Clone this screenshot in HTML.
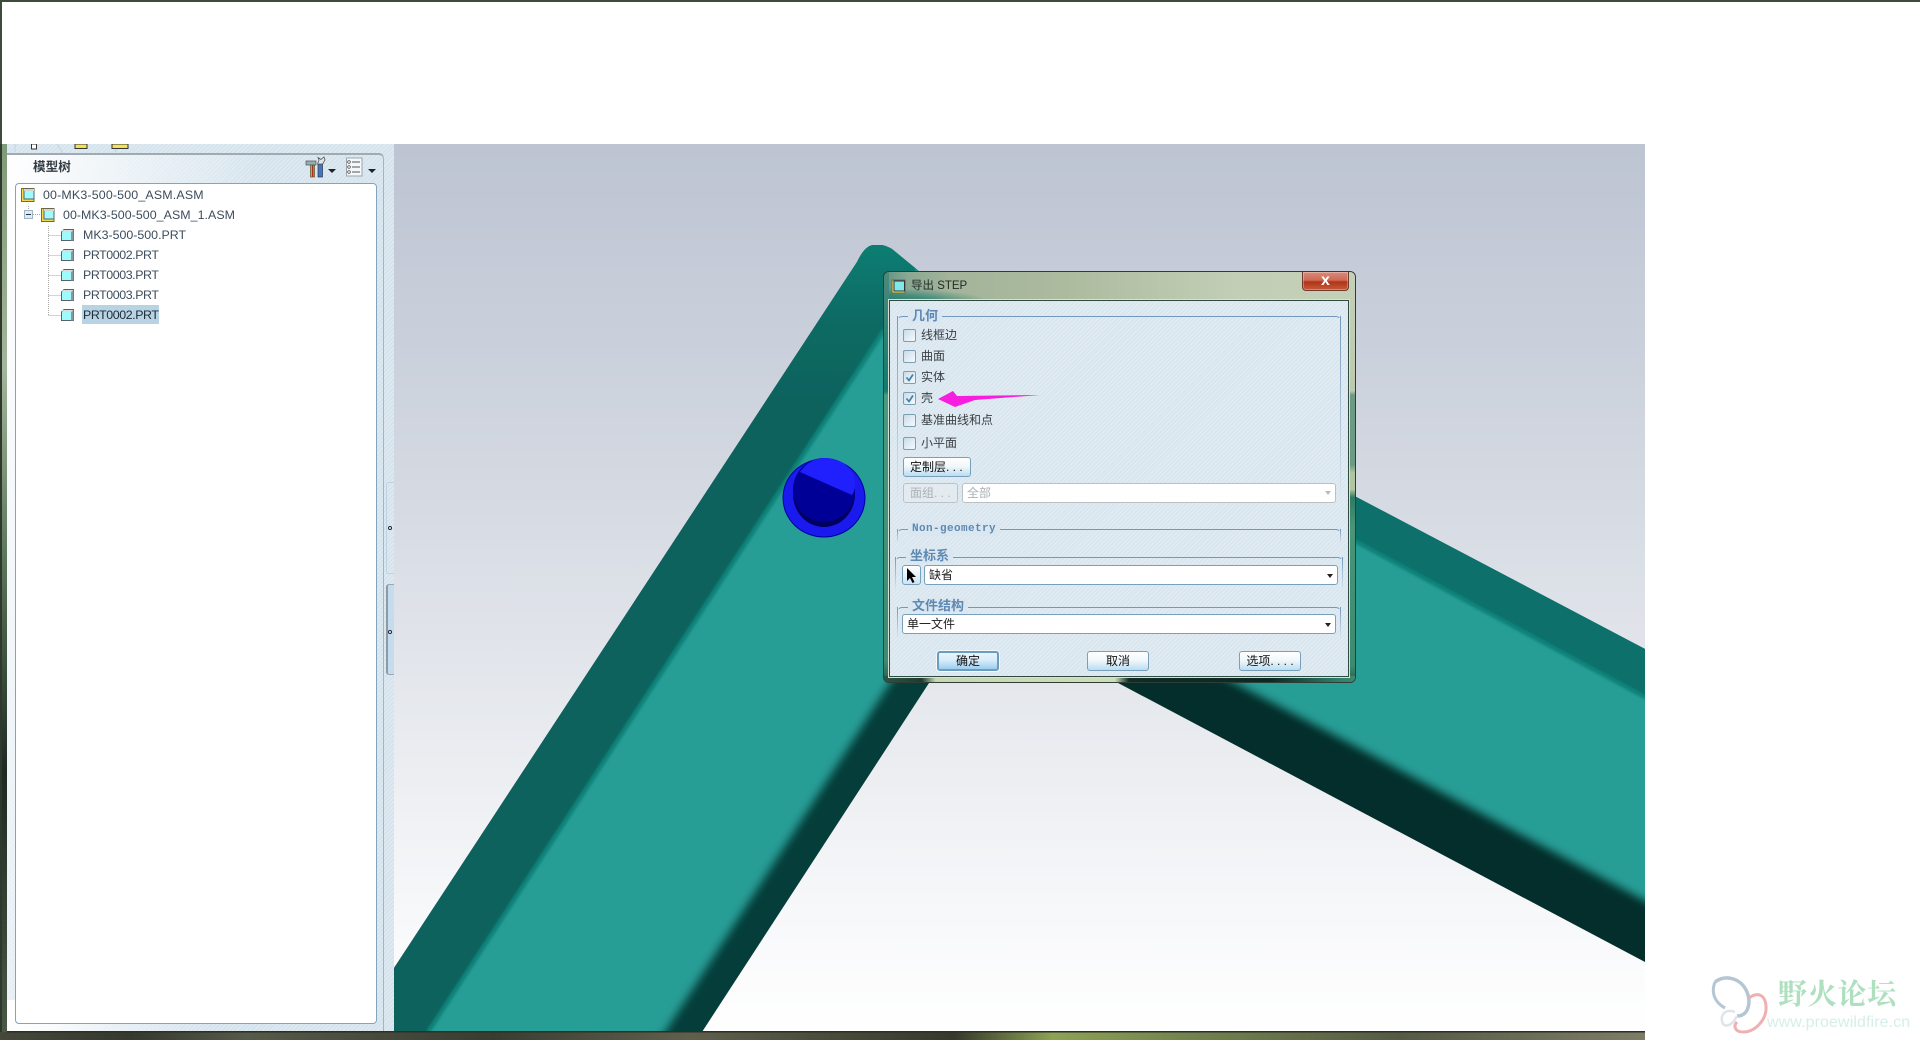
<!DOCTYPE html>
<html>
<head>
<meta charset="utf-8">
<style>
html,body{margin:0;padding:0;width:1920px;height:1040px;overflow:hidden;background:#fff;font-family:"Liberation Sans","Noto Sans CJK SC",sans-serif;}
.a{position:absolute;box-sizing:border-box;}
.stripe{background-color:#d9e6ef;background-image:repeating-linear-gradient(135deg,rgba(255,255,255,.28) 0,rgba(255,255,255,.28) 1px,rgba(255,255,255,0) 1px,rgba(255,255,255,0) 3px);}
.tree{position:absolute;font-size:12.4px;line-height:20px;color:#3d4c5c;white-space:nowrap;}
.lab{position:absolute;left:921px;font-size:12px;line-height:16px;color:#3a3f44;white-space:nowrap;font-family:"Liberation Sans","Noto Sans CJK SC",sans-serif;}
.cb{position:absolute;left:903px;width:13px;height:13px;box-sizing:border-box;border:1px solid #7d9fb6;border-radius:2px;background:linear-gradient(135deg,#c9dcea,#f6fafd);}
.btn{position:absolute;box-sizing:border-box;border:1px solid #76a0bb;border-radius:3px;background:linear-gradient(#fff 0,#f2f8fc 45%,#bcdcf2 100%);font-size:12px;line-height:18px;color:#111;text-align:center;white-space:nowrap;}
.combo{position:absolute;box-sizing:border-box;border:1px solid #76a0bb;border-radius:3px;background:#fff;font-size:12px;line-height:18px;color:#222;padding-left:4px;white-space:nowrap;}
.arr{position:absolute;width:0;height:0;border-left:3.5px solid transparent;border-right:3.5px solid transparent;border-top:4px solid #222;}
.grp{position:absolute;box-sizing:border-box;border:1px solid transparent;border-top:1px solid #7299bd;border-radius:5px 5px 0 0;}
.grp:before,.grp:after{content:"";position:absolute;top:-1px;width:1px;height:100%;background:linear-gradient(#7299bd,rgba(114,153,189,0));}
.grp:before{left:-1px;}.grp:after{right:-1px;}
.leg{position:absolute;background:#dbe7f0;color:#5d89b3;font-weight:bold;font-size:13px;line-height:14px;padding:0 4px;white-space:nowrap;font-family:"Liberation Sans","Noto Sans CJK SC",sans-serif;}
</style>
</head>
<body>
<!-- window frame -->
<div class="a" style="left:0;top:0;width:1920px;height:2px;background:#3d4a3c;"></div>
<div class="a" style="left:0;top:0;width:2px;height:144px;background:#3d4a3c;"></div>
<div class="a" style="left:0;top:144px;width:7px;height:896px;background:linear-gradient(#7f9a78 0,#a3b59a 25%,#5f7a5e 45%,#1e2a22 70%,#4a5a48 100%);border-left:2px solid #2e382c;"></div>

<!-- left panel -->
<div class="a stripe" style="left:7px;top:144px;width:387px;height:888px;background-color:#d5e3ed;"></div>
<svg class="a" style="left:7px;top:144px;" width="150" height="10">
<path d="M8 0L8 8M50 0L56 9M112 0L108 8" stroke="#c4d4de" fill="none"/>
<rect x="24.5" y="0" width="5" height="5" fill="#fff" stroke="#333"/>
<rect x="68" y="0" width="12" height="4.5" fill="#f2e25a" stroke="#333"/>
<rect x="105" y="0" width="16" height="4.5" fill="#f2e25a" stroke="#333"/>
</svg>
<div class="a" style="left:7px;top:153px;width:377px;height:879px;border:1px solid #a8b4bc;border-bottom:0;border-left:0;border-radius:0 5px 0 0;background:linear-gradient(100deg,#fff 0,rgba(255,255,255,0) 260px);border-top:2px solid #9faab1;"></div>
<div class="a" style="left:7px;top:1000px;width:377px;height:32px;background:linear-gradient(90deg,#fff 0,rgba(255,255,255,0) 200px);"></div>
<div class="a" style="left:33px;top:158px;font-size:12.6px;font-weight:bold;line-height:18px;color:#333c44;font-family:'Liberation Sans','Noto Sans CJK SC',sans-serif;">模型树</div>

<!-- toolbar icons -->
<svg class="a" style="left:304px;top:155px;" width="76" height="24">
<path d="M2 6H12V10H2Z" fill="#8eb0b8" stroke="#555" stroke-width=".7"/>
<rect x="6.5" y="10" width="4" height="12" fill="#d8a030" stroke="#553" stroke-width=".7"/>
<rect x="8" y="10" width="1.4" height="12" fill="#b03020"/>
<rect x="14" y="9" width="4.5" height="13" fill="#3f78c2" stroke="#334" stroke-width=".7"/>
<path d="M13.5 9L15 5L14 2.5L17 4.5L18.5 3L20 2L21 5L19 8.5L18.5 9Z" fill="#dfe4e6" stroke="#555" stroke-width=".8"/>
<path d="M24 14h8l-4 4z" fill="#222"/>
<rect x="42.5" y="3" width="15.5" height="18" fill="#f5f8fa" stroke="#9aa4ac"/>
<path d="M48 7h8M48 12h8M48 17h8" stroke="#555" stroke-width="1"/>
<circle cx="45" cy="7" r="1.3" fill="#fff" stroke="#333" stroke-width=".7"/><circle cx="45" cy="12" r="1.3" fill="#fff" stroke="#333" stroke-width=".7"/><circle cx="45" cy="17" r="1.3" fill="#fff" stroke="#333" stroke-width=".7"/>
<path d="M64 14h8l-4 4z" fill="#222"/>
</svg>

<!-- tree box -->
<div class="a" style="left:15px;top:183px;width:362px;height:841px;background:#fff;border:1px solid #7fa6bf;border-radius:4px;"></div>
<div class="a" style="left:82px;top:305px;width:77px;height:19px;background:#b8d3e3;"></div>
<svg class="a" style="left:15px;top:184px;" width="80" height="145">
<defs>
<g id="pt"><path d="M.5 3L3 .5H12.5V11.5H.5Z" fill="#9ffbfb" stroke="#55626c"/><path d="M1 1.5L3 1H12V2.5H1Z" fill="#d6dcdf"/><path d="M10 3V11.5H12.5V1Z" fill="#8a979e"/><path d="M1 3.2H9.6V11H1Z" fill="#9ffbfb"/></g>
<g id="as"><rect x=".5" y=".5" width="12.5" height="13" fill="#f4d94e" stroke="#7a6a22"/><rect x="3" y="1" width="10" height="10" fill="#9ffbfb" stroke="#55626c"/><path d="M3 1H13V3H3Z" fill="#cfd6da"/></g>
</defs>
<g stroke="#a9a9a9" stroke-dasharray="1 1" fill="none">
<path d="M13.5 22V28M18 30.5H26M33.5 42V131.5M33.5 51.5H46M33.5 71.5H46M33.5 91.5H46M33.5 111.5H46M33.5 131.5H46"/>
</g>
<rect x="9.5" y="26.5" width="8" height="8" fill="#dfeaf2" stroke="#9fb4c4"/><path d="M11 30.5h5" stroke="#234"/>
<use href="#as" x="6" y="4"/>
<use href="#as" x="26" y="24"/>
<use href="#pt" x="46" y="45"/>
<use href="#pt" x="46" y="65"/>
<use href="#pt" x="46" y="85"/>
<use href="#pt" x="46" y="105"/>
<use href="#pt" x="46" y="125"/>
</svg>
<div class="tree" style="left:43px;top:185px;letter-spacing:.17px;">00-MK3-500-500_ASM.ASM</div>
<div class="tree" style="left:63px;top:205px;letter-spacing:.05px;">00-MK3-500-500_ASM_1.ASM</div>
<div class="tree" style="left:83px;top:225px;">MK3-500-500.PRT</div>
<div class="tree" style="left:83px;top:245px;letter-spacing:-.42px;">PRT0002.PRT</div>
<div class="tree" style="left:83px;top:265px;letter-spacing:-.42px;">PRT0003.PRT</div>
<div class="tree" style="left:83px;top:285px;letter-spacing:-.42px;">PRT0003.PRT</div>
<div class="tree" style="left:83px;top:305px;color:#1c2a36;letter-spacing:-.42px;">PRT0002.PRT</div>

<!-- sashes -->
<div class="a" style="left:386px;top:482px;width:8px;height:92px;border:1px solid #bdd2e2;border-right:0;border-radius:3px 0 0 3px;"></div>
<div class="a" style="left:388px;top:526px;width:4px;height:4px;border:1px solid #223;border-radius:50%;background:#fff;"></div>
<div class="a" style="left:386px;top:584px;width:8px;height:91px;border:1px solid #9aa8b2;border-left:2px solid #8d9aa4;border-right:0;border-radius:3px 0 0 3px;background:#c4dcee;"></div>
<div class="a" style="left:388px;top:630px;width:4px;height:4px;border:1px solid #223;border-radius:50%;background:#fff;"></div>

<!-- viewport -->
<svg class="a" style="left:0;top:0;" width="1920" height="1040" viewBox="0 0 1920 1040">
<defs>
<linearGradient id="bg" x1="0" y1="144" x2="0" y2="1032" gradientUnits="userSpaceOnUse"><stop offset="0" stop-color="#bdc4d2"/><stop offset=".37" stop-color="#d3d8e1"/><stop offset=".62" stop-color="#e5e8ed"/><stop offset=".85" stop-color="#f6f7f9"/><stop offset="1" stop-color="#fff"/></linearGradient>
<linearGradient id="dk" x1="0" y1="245" x2="0" y2="400" gradientUnits="userSpaceOnUse"><stop offset="0" stop-color="#0b7d72"/><stop offset=".45" stop-color="#076c65"/><stop offset="1" stop-color="#07625d"/></linearGradient>
<clipPath id="vp"><rect x="394" y="144" width="1251" height="888"/></clipPath>
<clipPath id="main"><path d="M394 968L857 262Q865 245 874 245L882 245Q887 246 892 249L920 272L940 290L929 683L702 1032H394Z"/></clipPath>
<clipPath id="beam2"><path d="M1100 362L1645 649V962L1100 673.4Z"/></clipPath>
<filter id="b1" x="-10%" y="-10%" width="120%" height="120%"><feGaussianBlur stdDeviation="1.4"/></filter>
<filter id="b4" x="-10%" y="-10%" width="120%" height="120%"><feGaussianBlur stdDeviation="4.5"/></filter>
</defs>
<rect x="394" y="144" width="1251" height="888" fill="url(#bg)"/>
<g clip-path="url(#vp)">
 <g clip-path="url(#beam2)">
  <rect x="1100" y="350" width="560" height="620" fill="#032e2b"/>
  <path d="M1080 300H1700V930L1340 738L1080 602Z" fill="#279d95" filter="url(#b4)"/>
  <path d="M1080 300H1700V727L1645 697L1357 542L1080 393Z" fill="#07706b" filter="url(#b1)"/>
  <path d="M1080 393L1357 542L1645 697" fill="none" stroke="#0b8279" stroke-width="4" filter="url(#b1)"/>
 </g>
 <g clip-path="url(#main)">
  <rect x="380" y="230" width="600" height="810" fill="#053d3a"/>
  <path d="M400 1060H647L890 683L1004 506V220H884Z" fill="#279d95" filter="url(#b4)"/>
  <path d="M380 1040L420 1040L428 1032L884 330L920 262L880 230H380Z" fill="url(#dk)" filter="url(#b1)"/>
  <path d="M428 1032L884 330" fill="none" stroke="#0b8279" stroke-width="4" filter="url(#b1)"/>
 </g>
 <!-- blue knob -->
 <ellipse cx="824" cy="498" rx="41" ry="39" fill="#1a1aee" stroke="#0000a0" stroke-width="1"/>
 <ellipse cx="824" cy="494" rx="31" ry="33" fill="#00005f"/>
 <ellipse cx="824" cy="490" rx="31" ry="32" fill="#000096"/>
 <path d="M800 472C806 463 815 458 825 458C843 458 855 470 855 484C855 489 854 492 852 495Z" fill="#2020ff"/>
</g>
<!-- bottom bar -->
<defs><linearGradient id="bb" x1="0" y1="0" x2="1645" y2="0" gradientUnits="userSpaceOnUse"><stop offset="0" stop-color="#45483a"/><stop offset=".08" stop-color="#35392e"/><stop offset=".15" stop-color="#565a48"/><stop offset=".3" stop-color="#393d31"/><stop offset=".42" stop-color="#5f604c"/><stop offset=".58" stop-color="#36382b"/><stop offset=".64" stop-color="#8da254"/><stop offset=".72" stop-color="#73844e"/><stop offset=".85" stop-color="#555a44"/><stop offset="1" stop-color="#7d7d66"/></linearGradient></defs>
<rect x="0" y="1032" width="1645" height="8" fill="url(#bb)"/>
<rect x="7" y="1031" width="1638" height="1.5" fill="#2b2f27"/>
</svg>

<!-- dialog -->
<div class="a" style="left:883px;top:271px;width:473px;height:412px;border-radius:6px;border:1px solid #2f3d33;background:linear-gradient(90deg,#5e9486 0,#8aa892 5%,#a3b49a 14%,#adbb9f 40%,#c2cfb6 75%,#c4d0b6 100%);overflow:hidden;">
 <div class="a" style="left:0;top:0;width:150px;height:32px;background:radial-gradient(ellipse 110px 16px at 0 100%,rgba(20,120,105,.85) 0,rgba(20,120,105,.6) 55%,rgba(20,120,105,0) 100%);"></div>
 <div class="a" style="left:0;top:0;width:5px;height:410px;background:linear-gradient(#4d8a7c 0,#127a6e 29%,#4a9a80 30%,#3d8a70 95%,#2b5c48 100%);"></div>
 <div class="a" style="right:0;top:0;width:6px;height:410px;background:linear-gradient(#c5d0b8 0,#bccaad 29%,#6c9a82 30%,#6c9a82 47%,#b0c6a0 49%,#b0c6a0 53%,#2f7a62 55%,#4a9478 62%,#3d8a70 96%,#2b5c48 100%);"></div>
 <div class="a" style="left:0;bottom:0;width:471px;height:6px;background:linear-gradient(90deg,#2a5646 0,#1e3b30 8%,#c8d6b4 11%,#cfdcb9 48%,#cfdcb9 49%,#0f2d27 52%,#0a2a26 82%,#2d7d68 96%,#3d8a70 100%);"></div>
</div>
<svg class="a" style="left:891px;top:279px;" width="16" height="16">
<rect x="1" y="1" width="13" height="13" fill="#f5e742" stroke="#666"/><rect x="3" y="2" width="10.5" height="10" fill="#7fe8e8" stroke="#333"/>
</svg>
<div class="a" style="left:911px;top:278px;font-size:11.5px;line-height:16px;color:#1f2a24;white-space:nowrap;">导出 STEP</div>
<div class="a" style="left:1302px;top:272px;width:47px;height:19px;border:1px solid #6d3a30;border-top:0;border-radius:0 0 4px 4px;background:linear-gradient(#d98a78 0,#d06a58 45%,#b03518 55%,#c85a38 100%);color:#fff;font-size:16px;font-weight:bold;text-align:center;line-height:17px;box-shadow:inset 0 0 0 1px rgba(255,255,255,.3);">x</div>

<div class="a stripe" style="left:889px;top:300px;width:460px;height:377px;border:1px solid #2f4a40;background-color:#d9e6ef;box-shadow:0 0 0 1px #d5e3d6;"></div>

<!-- 几何 -->
<div class="grp" style="left:897px;top:316px;width:444px;height:190px;"></div>
<div class="leg" style="left:908px;top:309px;">几何</div>
<div class="cb" style="top:329px;"></div><div class="lab" style="top:327px;">线框边</div>
<div class="cb" style="top:350px;"></div><div class="lab" style="top:348px;">曲面</div>
<div class="cb" style="top:371px;"></div><div class="lab" style="top:369px;">实体</div>
<div class="cb" style="top:392px;"></div><div class="lab" style="top:390px;">壳</div>
<div class="cb" style="top:414px;"></div><div class="lab" style="top:412px;">基准曲线和点</div>
<div class="cb" style="top:437px;"></div><div class="lab" style="top:435px;">小平面</div>
<svg class="a" style="left:903px;top:371px;" width="14" height="40">
<path d="M3.5 6.5L6 9.5L10 3.5" fill="none" stroke="#3f7fa8" stroke-width="1.7"/>
<path d="M3.5 27.5L6 30.5L10 24.5" fill="none" stroke="#3f7fa8" stroke-width="1.7"/>
</svg>
<svg class="a" style="left:930px;top:385px;" width="120" height="28"><path d="M8 14L23 6L27 11L110 10L45 15L25 22Z" fill="#f81ee0"/></svg>

<div class="btn" style="left:903px;top:457px;width:68px;height:20px;color:#111;text-align:left;padding-left:6px;">定制层. . .</div>
<div class="btn" style="left:903px;top:483px;width:55px;height:20px;border-color:#b9c3c9;background:#e3ebf1;color:#aab2b8;text-align:left;padding-left:6px;">面组. . .</div>
<div class="combo" style="left:962px;top:483px;width:374px;height:20px;border-color:#bcc0c2;color:#aab0b4;">全部</div>
<div class="arr" style="left:1325px;top:491px;border-top-color:#bbb;"></div>

<!-- Non-geometry -->
<div class="grp" style="left:897px;top:529px;width:444px;height:16px;"></div>
<div class="leg" style="left:908px;top:522px;font-family:'Liberation Mono',monospace;font-size:11px;letter-spacing:.4px;">Non-geometry</div>

<!-- 坐标系 -->
<div class="grp" style="left:895px;top:557px;width:448px;height:36px;"></div>
<div class="leg" style="left:906px;top:549px;">坐标系</div>
<div class="btn" style="left:902px;top:565px;width:19px;height:20px;background:linear-gradient(#fff,#cfe3f2);"></div>
<svg class="a" style="left:905px;top:567px;" width="14" height="18"><path d="M2 1V14L5 11L7.5 16L9.5 15L7 10H11Z" fill="#000"/></svg>
<div class="combo" style="left:924px;top:565px;width:414px;height:20px;">缺省</div>
<div class="arr" style="left:1327px;top:574px;"></div>

<!-- 文件结构 -->
<div class="grp" style="left:897px;top:607px;width:444px;height:34px;"></div>
<div class="leg" style="left:908px;top:599px;">文件结构</div>
<div class="combo" style="left:902px;top:614px;width:434px;height:20px;">单一文件</div>
<div class="arr" style="left:1325px;top:623px;"></div>

<!-- buttons -->
<div class="btn" style="left:937px;top:651px;width:62px;height:20px;border:2px solid #6c9dbd;line-height:16px;background:linear-gradient(#e8f4fc 0,#d8ecfa 45%,#9ccdf0 100%);box-shadow:0 0 0 1px #f1f7fb;">确定</div>
<div class="btn" style="left:1087px;top:651px;width:62px;height:20px;">取消</div>
<div class="btn" style="left:1239px;top:651px;width:62px;height:20px;">选项. . . .</div>

<!-- watermark -->
<svg class="a" style="left:1711px;top:972px;" width="70" height="66">
<path d="M4 10C14 2 30 6 36 20C40 30 38 44 26 44" fill="none" stroke="#b4c6d4" stroke-width="3.5"/>
<path d="M4 10C0 20 3 30 14 36" fill="none" stroke="#b4c6d4" stroke-width="3"/>
<path d="M24 40C14 36 8 44 12 52C16 56 22 52 26 44" fill="none" stroke="#dde5ea" stroke-width="2.5"/>
<path d="M38 26C46 20 54 22 55 34C56 48 44 60 32 60C24 60 22 54 26 50" fill="none" stroke="#eeb0b0" stroke-width="3"/>
</svg>
<div class="a" style="left:1778px;top:978px;font-size:29px;line-height:34px;font-weight:bold;letter-spacing:.7px;color:#aee0bf;white-space:nowrap;font-family:'Liberation Serif','Noto Serif CJK SC',serif;">野火论坛</div>
<div class="a" style="left:1767px;top:1014px;font-size:16px;line-height:18px;letter-spacing:.1px;color:#d6eee9;white-space:nowrap;">www.proewildfire.cn</div>
</body>
</html>
